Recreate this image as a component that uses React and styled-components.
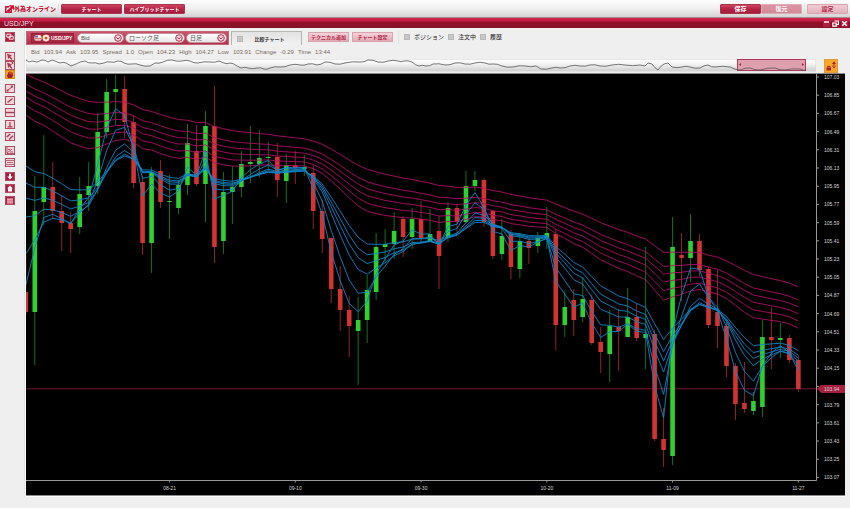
import React from 'react';
import styled, {createGlobalStyle} from 'styled-components';

const GlobalStyle = createGlobalStyle`
  * {
    box-sizing: border-box;
  }

  body {
    margin: 0;
    background: #fff;
    font-family: "Liberation Sans", "Noto Sans CJK JP", sans-serif;
    font-size: 6px;
    line-height: 8px;
    color: #333;
  }

  button, select, input {
    margin: 0;
    padding: 0;
    font: inherit;
  }

  svg {
    display: block;
  }
`;

const Page = styled.div`
  padding-bottom: 11px;
  background: #efefef;
`;

const Header = styled.header`
  display: flex;
  align-items: flex-start;
  height: 18px;
  padding: 4px 2px 0 5px;
  background: linear-gradient(#fdfdfd 0%, #f0f0f0 50%, #d4d4d4 100%);
  border-bottom: 1px solid #9a8c8f;
`;

const Logo = styled.a`
  display: flex;
  align-items: center;
  width: 51px;
  height: 10px;
  color: #cc1437;
  font-size: 6px;
  font-weight: 900;
  white-space: nowrap;
  text-decoration: none;
`;

const Divider = styled.span`
  width: 1px;
  height: 13px;
  margin: 0 2px;
  background: #e0e0e0;
`;

const headerTones = {
  dark: 'linear-gradient(#cf4463, #b32445 50%, #a81c3d)',
  muted: 'linear-gradient(#d98a9b, #d17f90)',
  light: 'linear-gradient(#f0ccd3, #e2b3bd)',
};

const HeaderButton = styled.button`
  width: ${({$wide}) => ($wide ? 61 : 41)}px;
  height: 10px;
  border: 1px solid ${({$tone}) => ($tone === 'dark' ? '#a93450' : '#dba5b0')};
  border-radius: 1px;
  background: ${({$tone}) => headerTones[$tone]};
  color: ${({$tone}) => ($tone === 'light' ? '#b0284a' : '#fff')};
  font-size: ${({$wide}) => ($wide ? 5 : 6)}px;
  line-height: 8px;
  font-weight: bold;
  opacity: ${({$tone}) => ($tone === 'muted' ? 0.9 : 1)};
`;

const Group = styled.div`
  display: flex;
  gap: ${({$gap}) => $gap || 0}px;
  margin-left: ${({$end}) => ($end ? 'auto' : 0)};
`;

const TitleBar = styled.div`
  display: flex;
  align-items: center;
  height: 10px;
  padding: 0 2px 0 4px;
  background: linear-gradient(#dc244e 0%, #c41c42 25%, #8f1027 45%, #88102a 100%);

  h1 {
    flex: 1;
    margin: 0;
    color: #f6dfe3;
    font-size: 7px;
    line-height: 9px;
    font-weight: normal;
  }
`;

const WindowButton = styled.button`
  width: 7px;
  height: 7px;
  border: 0;
  background: #ad2040;
`;

const Workspace = styled.div`
  display: grid;
  grid-template-columns: 25px 1fr;
  padding-right: 5px;
`;

const Sidebar = styled.nav`
  display: flex;
  flex-direction: column;
  gap: 5px;
  padding: 4px 0 0 5px;
  border-right: 1px solid #e4e4e4;
`;

const Tools = styled.div`
  display: flex;
  flex-direction: column;
  gap: ${({$gap}) => $gap}px;
  margin-bottom: ${({$last}) => ($last ? 5 : 0)}px;
`;

const toolTones = {
  pale: ['#f5d5da', '#a63a52'],
  solid: ['#b01c40', '#fff'],
  active: ['#f5a623', '#a31a38'],
};

const Tool = styled.button`
  width: 10px;
  height: ${({$tall}) => ($tall ? 10 : 9)}px;
  border: 1px solid ${({$tone}) => ($tone === 'active' ? '#d98b12' : '#b34b61')};
  background: ${({$tone}) => toolTones[$tone][0]};
  color: ${({$tone}) => toolTones[$tone][1]};
`;

const Main = styled.main`
  min-width: 0;
  border: 1px solid #fff;
  border-width: 0 0 1px 1px;
`;

const Toolbar = styled.div`
  display: flex;
  align-items: flex-start;
  height: 20px;
  padding-top: 3px;
`;

const SymbolPanel = styled.div`
  display: flex;
  align-items: center;
  height: 14px;
  padding: 0 1px 0 4px;
  border: 1px solid #c7647a;
  background: linear-gradient(#c9546c, #b0304c);
`;

const SymbolButton = styled.button`
  display: flex;
  align-items: center;
  gap: 1px;
  width: 43px;
  height: 10px;
  margin-right: 3px;
  padding-left: 2px;
  border: 1px solid #93203b;
  background: #a92846;
  color: #fff;
  font-size: 5px;
  font-weight: bold;
`;

const SelectWrap = styled.span`
  position: relative;
  width: ${({$width}) => $width}px;
  height: 10px;

  svg {
    position: absolute;
    top: 1px;
    right: 2px;
    pointer-events: none;
  }
`;

const Select = styled.select`
  display: block;
  width: 100%;
  height: 10px;
  padding-left: 3px;
  appearance: none;
  border: 1px solid #c9909c;
  border-radius: 5px;
  background: linear-gradient(#fff, #e6e6e6);
  color: #555;
  font-size: 6px;
  line-height: 8px;
`;

const CompareTab = styled.label`
  display: flex;
  align-items: center;
  width: 71px;
  height: 14px;
  margin: 0 6px 0 2px;
  padding: 0 5px;
  border: 1px solid #b5b5b5;
  border-bottom: 0;
  background: linear-gradient(#e2e2e2, #f2f2f2);
  font-size: 5px;
  font-weight: bold;

  span {
    flex: 1;
    text-align: center;
  }
`;

const Checkbox = styled.input`
  width: 6px;
  height: 6px;
  appearance: none;
  border: 1px solid #bababa;
  background: #c6c6c6;
`;

const PinkButton = styled.button`
  width: 41px;
  height: 10px;
  margin-top: 1px;
  border: 1px solid #d9a3ae;
  background: linear-gradient(#f4d3d9, #e3a9b6);
  color: #a91c40;
  font-size: 5px;
  line-height: 8px;
  font-weight: bold;
  white-space: nowrap;
`;

const CheckLabel = styled.label`
  display: flex;
  align-items: center;
  gap: 4px;
  height: 11px;
  color: #222;
`;

const Quote = styled.dl`
  display: flex;
  gap: 4px;
  height: 10px;
  margin: 0;
  padding-left: 5px;
  color: #796a63;
  line-height: 8px;

  dd {
    margin: 0;
  }
`;

const OverviewRow = styled.div`
  display: flex;
  align-items: center;
  gap: 8px;
  height: 15px;
  padding-right: 7px;
`;

const Overview = styled.svg`
  flex: 1;
  min-width: 0;
`;

const LockButton = styled.button`
  width: 14px;
  height: 14px;
  border: 1px solid #e09a3c;
  background: #f9a825;
`;

const ChartFrame = styled.div`
  border: 1px solid #8b8b8b;
  border-width: 1px 0;
  background: #000;
`;

const Chart = styled.svg`
  width: 100%;

  text {
    fill: #d6d6d6;
    font-size: 5px;
  }
`;

// [up, body top, body bottom, high, low], on the scale of the chart's viewBox
const candles = [
  [0, 292, 312, 255, 315], [1, 211, 312, 176, 365], [1, 187, 202, 135, 225], [0, 187, 211, 162, 219],
  [0, 211, 223, 195, 251], [0, 223, 229, 212, 253], [1, 194, 227, 177, 234], [1, 186, 195, 162, 211],
  [1, 132, 186, 113, 194], [1, 92, 132, 79, 138], [1, 89, 92, 75, 125], [0, 89, 122, 76, 138],
  [0, 122, 183, 115, 188], [0, 182, 243, 176, 255], [1, 172, 243, 167, 273], [0, 171, 202, 160, 208],
  [1, 201, 202, 175, 239], [1, 185, 208, 180, 214], [1, 143, 185, 124, 195], [0, 151, 184, 125, 186],
  [1, 126, 184, 111, 222], [0, 126, 247, 86, 263], [1, 192, 241, 172, 254], [1, 187, 192, 166, 224],
  [1, 164, 187, 151, 197], [1, 162, 164, 126, 183], [1, 158, 164, 130, 177], [1, 157, 158, 142, 170],
  [0, 157, 180, 143, 197], [1, 165, 181, 154, 203], [0, 165, 168, 151, 184], [1, 167, 169, 155, 176],
  [0, 173, 211, 165, 229], [0, 211, 239, 200, 253], [0, 238, 289, 238, 303], [0, 289, 310, 266, 331],
  [0, 310, 326, 296, 357], [1, 320, 331, 297, 385], [1, 290, 320, 275, 343], [1, 247, 292, 233, 300],
  [1, 244, 247, 229, 262], [1, 231, 244, 212, 259], [0, 219, 237, 216, 257], [1, 219, 237, 208, 249],
  [0, 219, 238, 201, 243], [1, 234, 242, 209, 242], [0, 231, 256, 216, 289], [1, 208, 238, 202, 242],
  [0, 208, 222, 204, 235], [1, 186, 222, 171, 223], [1, 180, 186, 171, 191], [0, 180, 222, 178, 227],
  [0, 211, 256, 210, 259], [1, 236, 254, 219, 260], [0, 234, 267, 230, 279], [1, 241, 269, 233, 278],
  [0, 241, 248, 238, 264], [1, 238, 246, 232, 253], [1, 233, 238, 207, 249], [0, 234, 325, 229, 350],
  [1, 307, 325, 291, 337], [0, 300, 320, 289, 336], [1, 299, 317, 277, 322], [0, 300, 343, 295, 345],
  [0, 342, 352, 327, 373], [1, 326, 354, 310, 382], [0, 327, 331, 309, 371], [1, 317, 337, 288, 337],
  [0, 317, 338, 303, 341], [1, 334, 338, 247, 369], [0, 334, 439, 330, 441], [0, 439, 450, 408, 467],
  [1, 247, 456, 217, 465], [0, 255, 258, 233, 301], [1, 241, 258, 214, 282], [0, 241, 270, 234, 276],
  [0, 269, 325, 267, 328], [0, 312, 326, 270, 348], [0, 326, 366, 323, 377], [0, 366, 404, 363, 420],
  [0, 403, 409, 362, 413], [1, 401, 411, 392, 415], [1, 337, 407, 320, 417], [0, 337, 340, 307, 369],
  [1, 338, 340, 323, 358], [0, 338, 360, 335, 363], [0, 360, 389, 355, 392],
];

// [period, value at the left edge]
const shortAverages = [[3, 285], [5, 254], [8, 217], [10, 198], [12, 183], [15, 166]];
const longAverages = [[30, 115], [35, 105], [40, 97], [45, 91], [50, 84], [60, 74]];

const prices = [
  '107.03', '106.85', '106.67', '106.49', '106.31', '106.13', '105.95', '105.77',
  '105.59', '105.41', '105.23', '105.05', '104.87', '104.69', '104.51', '104.33',
  '104.15', '103.97', '103.79', '103.61', '103.43', '103.25', '103.07',
];

const dates = [[16, '08-21'], [30, '09-10'], [44, '09-30'], [58, '10-20'], [72, '11-09'], [86, '11-27']];

const quote = [
  ['Bid', '103.94'], ['Ask', '103.95'], ['Spread', '1.0'], ['Open', '104.23'],
  ['High', '104.27'], ['Low', '103.91'], ['Change', '-0.29'], ['Time', '13:44'],
];

const overview = [
  [26, 59], [29, 61], [32, 60], [37, 61], [42, 59], [48, 61], [52, 59], [55, 60], [60, 62], [66, 62], [71, 65],
  [76, 63], [80, 61], [85, 60], [92, 62], [99, 63], [104, 62], [110, 61], [118, 60], [124, 62], [132, 63],
  [140, 64], [150, 65], [155, 62], [163, 61], [172, 59], [182, 60], [190, 60], [198, 62], [210, 61], [219, 60],
  [224, 62], [230, 62], [237, 65], [241, 67], [248, 67], [257, 67], [264, 68], [270, 67], [280, 66], [290, 64],
  [300, 64], [308, 63], [317, 64], [325, 61], [335, 63], [345, 62], [360, 61], [368, 59], [378, 61], [388, 60],
  [398, 60], [404, 60], [412, 61], [419, 65], [426, 65], [433, 63], [445, 64], [455, 62], [465, 63], [475, 62],
  [485, 62], [493, 63], [502, 65], [513, 66], [525, 65], [536, 65], [541, 68], [552, 67], [560, 67], [570, 65],
  [580, 65], [590, 64], [600, 65], [612, 64], [625, 64], [640, 64], [645, 65], [648, 62], [652, 63], [658, 69],
  [664, 63], [668, 62], [672, 66], [682, 66], [690, 66], [700, 67], [708, 64], [715, 66], [730, 66], [740, 69],
  [750, 67], [760, 69], [775, 67], [785, 69], [800, 68], [806, 69],
];

const xOf = (i) => 25.8 + i * 8.983;

const averagePoints = ([period, start]) => {
  let value = start;

  return candles.map(([up, top, bottom], i) => {
    if (i > 0) {
      value += ((up ? top : bottom) - value) * 2 / (period + 1);
    }
    return `${xOf(i).toFixed(1)},${value.toFixed(1)}`;
  }).join(' ');
};

const overviewPoints = overview.flatMap(([x, y], i) => {
  const next = overview[i + 1];
  return next && next[0] - x > 5
    ? [`${x},${y}`, `${(x + next[0]) / 2},${(y + next[1]) / 2 + (i % 2 ? 0.7 : -0.7)}`]
    : [`${x},${y}`];
}).join(' ');

const stroke = {fill: 'none', stroke: 'currentColor', strokeWidth: 1};

const cursor = <path d="M1 0.5l5 2-1.6 1 2 2.4-1 1-2.2-2.3-.9 1.6z" fill="currentColor"/>;

const toolGroups = [
  {
    gap: 0,
    tools: [
      ['Select', 'pale', cursor],
      ['Select point', 'pale', <>{cursor}<path d="M5.5 1h2M6.5 0v2" {...stroke}/></>],
      ['Pan', 'active', <path d="M2 7L.6 4l.8-.5L2 4V1.2h.9V3h.4V.5h.9V3h.4V.8h.9v2.5h.4V1.6h.9V5L6 7z" fill="currentColor"/>],
    ],
  },
  {
    gap: 3,
    tools: [
      ['Line segment', 'pale', <><path d="M1.5 5.5l5-4" {...stroke}/><path d="M.5 4.5h2v2h-2zM5 .5h2v2H5z" fill="currentColor"/></>],
      ['Trend line', 'pale', <path d="M1.5 5.5l5-4" {...stroke} strokeWidth="1.3"/>],
      ['Horizontal line', 'pale', <path d="M0 3.5h8" {...stroke} strokeWidth="1.4"/>],
      ['Vertical line', 'pale', <path d="M4 1v5M1.5 5.8h5" {...stroke} strokeWidth="1.2"/>],
      ['Parallel lines', 'pale', <path d="M.8 4l3.4-3M3.2 6.4L7 2.8" {...stroke} strokeWidth="1.4"/>],
    ],
  },
  {
    gap: 3,
    tools: [
      ['Fibonacci', 'pale', <path d="M1 0v6.5h7M1 6l5-4M2 2.5h2M4 5h3" {...stroke} strokeWidth=".8"/>],
      ['Retracement', 'pale', <path d="M0 1.5h8M1 3.5h6M0 5.5h8" {...stroke} strokeWidth=".7"/>],
    ],
  },
  {
    gap: 3,
    tools: [
      ['Sell mark', 'solid', <path d="M3 .8h2v2.7h1.8L4 6.5 1.2 3.5H3z" fill="currentColor"/>],
      ['Buy mark', 'solid', <path d="M4 .5l2.8 3H6v3H2v-3h-.8z" fill="currentColor"/>],
      ['List', 'solid', <><path d="M1 1.5h6v5H1z" fill="#f0bcc6"/><path d="M1 3.2h6M1 5h6" stroke="#a83a54" strokeWidth=".6"/></>],
    ],
  },
];

function ToolIcon({label, tone, tall, children}) {
  return (
    <Tool type="button" aria-label={label} $tone={tone} $tall={tall}>
      <svg width="8" height={tall ? 8 : 7} viewBox={tall ? '0 0 8 8' : '0 0 8 7'}>{children}</svg>
    </Tool>
  );
}

function Dropdown({label, width, value}) {
  return (
    <SelectWrap $width={width}>
      <Select aria-label={label} defaultValue={value}>
        <option>{value}</option>
      </Select>
      <svg width="8" height="8" viewBox="0 0 8 8">
        <circle cx="4" cy="4" r="3.3" fill="#f3d3d9" stroke="#b8304e"/>
        <path d="M2.3 3.3L4 5l1.7-1.7" fill="none" stroke="#b8304e"/>
      </svg>
    </SelectWrap>
  );
}

function PriceChart() {
  return (
    <Chart viewBox="26 74 819 421" role="img" aria-label="USD/JPY">
      <path d="M26 388.8H817" stroke="#801c3a" strokeWidth=".9"/>
      {candles.map(([up, top, bottom, high, low], i) => (
        <g key={i}>
          <path d={`M${xOf(i)} ${high}V${low}`} stroke={up ? '#14711a' : '#8c2528'}/>
          <rect x={xOf(i) - 2.3} y={top} width="4.6" height={bottom - top} fill={up ? '#2fd02f' : '#d23434'}/>
        </g>
      ))}
      <g fill="none" strokeWidth=".9">
        {longAverages.map((average) => (
          <polyline key={average[0]} points={averagePoints(average)} stroke="#b00c68"/>
        ))}
        {shortAverages.map((average) => (
          <polyline key={average[0]} points={averagePoints(average)} stroke="#0c86cc"/>
        ))}
      </g>
      <path d="M816.5 74v406.5M26 480.5h790.5" fill="none" stroke="#999"/>
      {prices.map((price, i) => {
        const y = 77 + i * 18.2;
        return (
          <g key={price}>
            <path d={`M816.5 ${y}h2.5`} stroke="#999"/>
            {price !== '103.97' && <text x="824" y={y + 2}>{price}</text>}
          </g>
        );
      })}
      {dates.map(([i, date]) => (
        <g key={date}>
          <path d={`M${xOf(i)} 480v2.5`} stroke="#999"/>
          <text x={xOf(i)} y="490" textAnchor="middle">{date}</text>
        </g>
      ))}
      <path d="M817 388.8l4-3.8h24v8h-24z" fill="#a51e3e"/>
      <text x="824" y="391">103.94</text>
    </Chart>
  );
}

function App() {
  return (
    <Page>
      <GlobalStyle/>
      <Header>
        <Logo href="#">
          <svg width="9" height="9" viewBox="0 0 9 9">
            <path d="M0 1h5L3.5 2.7h-2v3.6h4V5L7 3.6V8H0z" fill="#cc1437"/>
            <path d="M4 .3h5v5L7.5 3.6 3.3 7.2 1.8 5.8l4-3.9z" fill="#cc1437"/>
          </svg>
          外為オンライン
        </Logo>
        <Divider/>
        <Group $gap={2}>
          <HeaderButton type="button" $wide $tone="dark">チャート</HeaderButton>
          <HeaderButton type="button" $wide $tone="dark">ハイブリッドチャート</HeaderButton>
        </Group>
        <Group $end>
          <HeaderButton type="button" $tone="dark">保存</HeaderButton>
          <HeaderButton type="button" $tone="muted">復元</HeaderButton>
        </Group>
        <Divider/>
        <HeaderButton type="button" $tone="light">設定</HeaderButton>
      </Header>
      <TitleBar>
        <h1>USD/JPY</h1>
        <Group $gap={2}>
          <WindowButton type="button" aria-label="Minimize">
            <svg width="7" height="7" viewBox="0 0 7 7"><path d="M1 2h5" stroke="#fff" strokeWidth="1.4"/></svg>
          </WindowButton>
          <WindowButton type="button" aria-label="Restore">
            <svg width="7" height="7" viewBox="0 0 7 7">
              <path d="M2.5 1h4v3.5h-2M.8 3h3.4v3.2H.8z" fill="none" stroke="#fff" strokeWidth="1.2"/>
            </svg>
          </WindowButton>
          <WindowButton type="button" aria-label="Close">
            <svg width="7" height="7" viewBox="0 0 7 7"><path d="M1.2 1.2l4.6 4.6M5.8 1.2L1.2 5.8" stroke="#fff" strokeWidth="1.3"/></svg>
          </WindowButton>
        </Group>
      </TitleBar>

      <Workspace>
        <Sidebar>
          <Tools $last>
            <ToolIcon label="Windows" tone="solid" tall>
              <path d="M.8 1.2h4v3h-4zM3.2 3.2h4v3h-4z" fill="none" stroke="#fff" strokeWidth=".9"/>
            </ToolIcon>
          </Tools>
          {toolGroups.map(({gap, tools}, i) => (
            <Tools key={i} $gap={gap}>
              {tools.map(([label, tone, icon]) => (
                <ToolIcon key={label} label={label} tone={tone}>{icon}</ToolIcon>
              ))}
            </Tools>
          ))}
        </Sidebar>

        <Main>
          <Toolbar>
            <SymbolPanel>
              <SymbolButton type="button">
                <svg width="16" height="8" viewBox="0 0 16 8">
                  <rect x=".5" y="1" width="7" height="6" rx="2" fill="#f3e5e0"/>
                  <path d="M1 4.5h6M1 6.2h6" stroke="#d05a50" strokeWidth=".8"/>
                  <path d="M1 1.5h3v2H1z" fill="#65709c"/>
                  <circle cx="12" cy="4" r="3.3" fill="#fff" stroke="#f0b060" strokeWidth=".6"/>
                  <circle cx="12" cy="4" r="1.5" fill="#e8481c"/>
                </svg>
                USD/JPY
              </SymbolButton>
              <Group $gap={1}>
                <Dropdown label="Price" width={47} value="Bid"/>
                <Dropdown label="Chart type" width={60} value="ローソク足"/>
                <Dropdown label="Period" width={41} value="日足"/>
              </Group>
            </SymbolPanel>
            <CompareTab>
              <Checkbox type="checkbox"/>
              <span>比較チャート</span>
            </CompareTab>
            <Group $gap={3}>
              <PinkButton type="button">テクニカル追加</PinkButton>
              <PinkButton type="button">チャート設定</PinkButton>
              <Divider/>
              <Group $gap={4}>
                <CheckLabel><Checkbox type="checkbox"/>ポジション</CheckLabel>
                <CheckLabel><Checkbox type="checkbox"/>注文中</CheckLabel>
                <CheckLabel><Checkbox type="checkbox"/>履歴</CheckLabel>
              </Group>
            </Group>
          </Toolbar>
          <Quote>
            {quote.map(([name, value]) => (
              <React.Fragment key={name}>
                <dt>{name}</dt>
                <dd>{value}</dd>
              </React.Fragment>
            ))}
          </Quote>
          <OverviewRow>
            <Overview viewBox="26 58 790 13" role="img" aria-label="Overview">
              <defs>
                <linearGradient id="track" x1="0" y1="0" x2="0" y2="1">
                  <stop offset="0" stopColor="#fff"/>
                  <stop offset=".4" stopColor="#f4f4f4"/>
                  <stop offset="1" stopColor="#cfcfcf"/>
                </linearGradient>
              </defs>
              <rect x="26" y="58" width="790" height="12" fill="url(#track)" stroke="#d4d4d4"/>
              <rect x="737.5" y="58.5" width="68" height="11" fill="#dda0ac" stroke="#b03a56"/>
              <polyline points={overviewPoints} fill="none" stroke="#555" strokeWidth=".8"/>
              <path d="M741 62v3l-2-1.5zM802 62v3l2-1.5z" fill="#a51e3e"/>
            </Overview>
            <LockButton type="button" aria-label="Lock scale">
              <svg width="12" height="12" viewBox="0 0 12 12">
                <path d="M1.5 7.5H6v3H1.5z" fill="#a51e3e"/>
                <path d="M2.5 7.5V6.3H5v1.2" fill="none" stroke="#a51e3e"/>
                <path d="M9 1.2L11 4H7zM9 8.5l2-2.8H7zM8.5 3h1v4h-1z" fill="#a51e3e"/>
              </svg>
            </LockButton>
          </OverviewRow>
          <ChartFrame>
            <PriceChart/>
          </ChartFrame>
        </Main>
      </Workspace>
    </Page>
  );
}

export default App;
